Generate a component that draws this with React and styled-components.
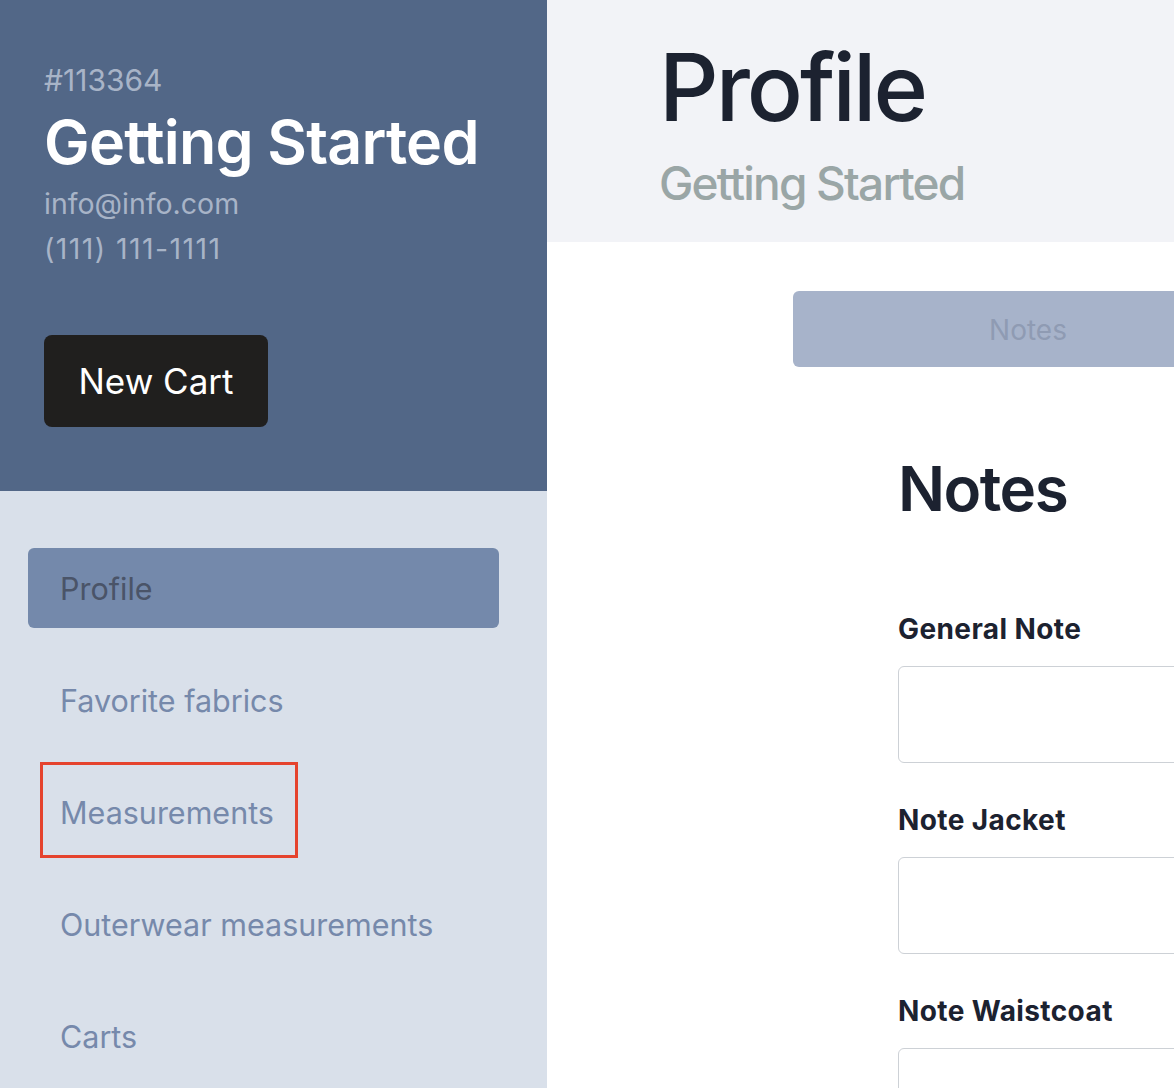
import React from 'react';
import styled, { createGlobalStyle } from 'styled-components';

const GlobalStyle = createGlobalStyle`
  html, body {
    margin: 0;
    padding: 0;
    background: #ffffff;
    overflow: hidden;
  }
  body {
    font-family: Inter, "Noto Sans", "Liberation Sans", sans-serif;
  }
`;

const Page = styled.div`
  display: grid;
  grid-template-columns: 547px 1fr;
  width: 1174px;
  min-height: 1088px;
  overflow: hidden;
`;

const Sidebar = styled.aside`
  display: flex;
  flex-direction: column;
  background: #d9e0ea;
`;

const Customer = styled.div`
  display: flex;
  flex-direction: column;
  align-items: flex-start;
  height: 491px;
  box-sizing: border-box;
  padding: 63px 0 0 44px;
  background: #526787;
`;

const CustomerId = styled.div`
  font-size: 30px;
  line-height: 34px;
  color: #a8b4c7;
`;

const CustomerName = styled.h1`
  margin: 10px 0 0;
  font-size: 61px;
  line-height: 70px;
  font-weight: 600;
  color: #ffffff;
  letter-spacing: -0.8px;
`;

const Contact = styled.div`
  margin-top: ${({ $first }) => ($first ? '4px' : '0')};
  font-size: 28.5px;
  line-height: 45px;
  color: #a8b4c7;
  letter-spacing: ${({ $phone }) => ($phone ? '1.4px' : '0')};
`;

const NewCartButton = styled.button`
  margin-top: 64px;
  width: 224px;
  height: 92px;
  border: none;
  border-radius: 8px;
  background: #201f1e;
  color: #ffffff;
  font-family: inherit;
  font-size: 35px;
  cursor: pointer;
`;

const Nav = styled.nav`
  display: flex;
  flex-direction: column;
  gap: 32px;
  padding: 57px 48px 0 28px;
`;

const NavItem = styled.a`
  position: relative;
  display: flex;
  align-items: center;
  height: 80px;
  padding-left: 32px;
  border-radius: 6px;
  font-size: 30.5px;
  color: ${({ $active }) => ($active ? '#4a5468' : '#7689ab')};
  background: ${({ $active }) => ($active ? '#7489ab' : 'transparent')};
  text-decoration: none;
`;

const Highlight = styled.span`
  position: absolute;
  left: 12px;
  top: -10px;
  width: 258px;
  height: 96px;
  box-sizing: border-box;
  border: 3px solid #e5432e;
  pointer-events: none;
`;

const Main = styled.main`
  display: flex;
  flex-direction: column;
  min-width: 0;
`;

const Header = styled.header`
  height: 242px;
  box-sizing: border-box;
  padding: 32px 0 0 112px;
  background: #f2f3f7;
`;

const PageTitle = styled.h2`
  margin: 0;
  font-size: 93px;
  line-height: 110px;
  font-weight: 500;
  color: #1c2230;
  letter-spacing: -3px;
`;

const PageSubtitle = styled.div`
  margin-top: 14px;
  font-size: 46px;
  line-height: 54px;
  font-weight: 500;
  color: #9aa6a6;
  letter-spacing: -1.8px;
`;

const Tabs = styled.div`
  display: flex;
  padding: 49px 0 0 246px;
`;

const Tab = styled.button`
  flex: none;
  width: 470px;
  height: 76px;
  padding-top: 3px;
  border: none;
  border-radius: 6px;
  background: #a7b3ca;
  color: #8f9bb3;
  font-family: inherit;
  font-size: 28px;
`;

const Section = styled.section`
  display: flex;
  flex-direction: column;
  padding: 84px 0 0 351px;
`;

const SectionTitle = styled.h3`
  margin: 0 0 83px;
  font-size: 62px;
  line-height: 76px;
  font-weight: 600;
  color: #1c2230;
  letter-spacing: -1.5px;
`;

const Field = styled.div`
  display: flex;
  flex-direction: column;
  gap: 18px;
  margin-bottom: 38px;
`;

const Label = styled.label`
  font-size: 28px;
  line-height: 38px;
  font-weight: 700;
  color: #1c2230;
  letter-spacing: 0.4px;
`;

const NoteInput = styled.textarea`
  width: 600px;
  height: 97px;
  box-sizing: border-box;
  border: 1.5px solid #cdd1d6;
  border-radius: 6px;
  resize: none;
  font-family: inherit;
`;

const navItems = [
  'Profile',
  'Favorite fabrics',
  'Measurements',
  'Outerwear measurements',
  'Carts',
];

const fields = ['General Note', 'Note Jacket', 'Note Waistcoat'];

export default function App() {
  return (
    <>
      <GlobalStyle />
      <Page>
        <Sidebar>
          <Customer>
            <CustomerId>#113364</CustomerId>
            <CustomerName>Getting Started</CustomerName>
            <Contact $first>info@info.com</Contact>
            <Contact $phone>(111) 111-1111</Contact>
            <NewCartButton>New Cart</NewCartButton>
          </Customer>
          <Nav>
            {navItems.map((item, i) => (
              <NavItem key={item} href="#" $active={i === 0}>
                {item}
                {item === 'Measurements' && <Highlight />}
              </NavItem>
            ))}
          </Nav>
        </Sidebar>
        <Main>
          <Header>
            <PageTitle>Profile</PageTitle>
            <PageSubtitle>Getting Started</PageSubtitle>
          </Header>
          <Tabs>
            <Tab>Notes</Tab>
          </Tabs>
          <Section>
            <SectionTitle>Notes</SectionTitle>
            {fields.map((f) => (
              <Field key={f}>
                <Label>{f}</Label>
                <NoteInput />
              </Field>
            ))}
          </Section>
        </Main>
      </Page>
    </>
  );
}
